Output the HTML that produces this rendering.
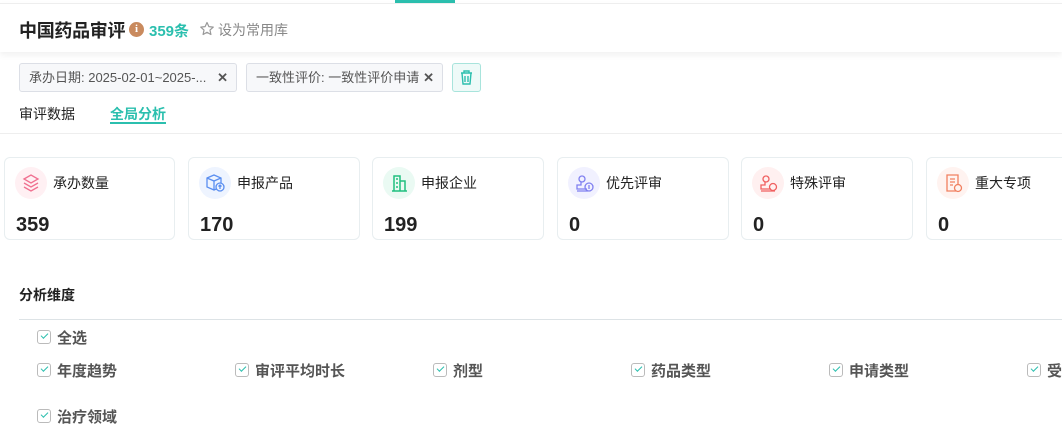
<!DOCTYPE html>
<html><head><meta charset="utf-8"><style>
*{margin:0;padding:0;box-sizing:border-box}
body{width:1062px;height:439px;overflow:hidden;background:#fff;font-family:"Liberation Sans","Noto Sans CJK SC",sans-serif;position:relative;color:#222}
.abs{position:absolute}
.hdr{left:0;top:3px;width:1062px;height:49px;background:#fff;box-shadow:0 3px 6px rgba(0,0,0,0.06);border-top:1px solid #eee}
.tag{top:63px;height:29px;border:1px solid #dcdfe6;border-radius:3px;background:#f7f8fa;font-size:13px;color:#555;line-height:27px;padding-left:9px}
.tag b{position:absolute;right:8px;top:0;font-weight:bold;color:#555;font-size:13px}
.card{top:157px;width:172px;height:83px;border:1px solid #e8eef0;border-radius:6px;background:#fff}
.ic{position:absolute;left:10px;top:9px;width:32px;height:32px;border-radius:50%}
.card .l{position:absolute;left:48px;top:15px;font-size:14px;color:#222}
.card .n{position:absolute;left:11px;top:56px;font-size:20px;font-weight:bold;color:#222}
.cb{font-size:15px;color:#555;font-weight:bold}
.cb i{position:absolute;left:0;top:2px;width:14px;height:14px;border:1px solid #bbb;border-radius:3px}
.cb i:after{content:"";position:absolute;left:3px;top:2px;width:6px;height:3px;border-left:1.5px solid #2bbfae;border-bottom:1.5px solid #2bbfae;transform:rotate(-45deg)}
.cb span{position:absolute;left:20px;top:-1px;white-space:nowrap}
</style></head><body>
<div class="abs" style="left:395px;top:0;width:60px;height:3px;background:#2bbfae"></div>
<div class="abs hdr"></div>
<div class="abs" style="left:19px;top:17px;font-size:18px;font-weight:bold;color:#222;letter-spacing:-0.3px">中国药品审评</div>
<div class="abs" style="left:129px;top:22px;width:15px;height:15px;border-radius:50%;background:#c98a5e;color:#fff;font-size:11px;font-weight:bold;text-align:center;line-height:15px;font-family:'Liberation Serif',serif">i</div>
<div class="abs" style="left:149px;top:20px;font-size:15px;font-weight:bold;color:#2bbfae">359条</div>
<svg class="abs" style="left:199px;top:21px" width="16" height="16" viewBox="0 0 16 16"><path d="M8 1.5l1.9 4.1 4.4.5-3.3 3 .9 4.4L8 11.3l-3.9 2.2.9-4.4-3.3-3 4.4-.5z" fill="none" stroke="#999" stroke-width="1.2" stroke-linejoin="round"/></svg>
<div class="abs" style="left:218px;top:20px;font-size:14px;color:#888">设为常用库</div>
<div class="abs tag" style="left:19px;width:218px">承办日期: 2025-02-01~2025-...<b>✕</b></div>
<div class="abs tag" style="left:246px;width:197px">一致性评价: 一致性评价申请<b>✕</b></div>
<div class="abs" style="left:452px;top:63px;width:29px;height:29px;border:1px solid #a8e4dc;background:#eefaf8;border-radius:3px">
<svg width="27" height="27" viewBox="0 0 27 27"><g fill="none" stroke="#2bbfae" stroke-width="1.4"><path d="M8 9h11M11 9V7h5v2M9 9l1 11h7l1-11M12 12v6M15 12v6"/></g></svg></div>
<div class="abs" style="left:19px;top:104px;font-size:14px;color:#222">审评数据</div>
<div class="abs" style="left:110px;top:104px;font-size:14px;font-weight:bold;color:#2bbfae">全局分析</div>
<div class="abs" style="left:110px;top:122px;width:56px;height:2px;background:#2bbfae"></div>
<div class="abs" style="left:0;top:133px;width:1062px;height:1px;background:#eee"></div>

<div class="abs card" style="left:4px;width:171px"><div class="ic" style="background:#fff0f3"><svg width="32" height="32"><g fill="none" stroke="#f07090" stroke-width="1.3"><path d="M9 12l7-4 7 4-7 4z"/><path d="M9 16l7 4 7-4M9 20l7 4 7-4"/></g></svg></div><div class="l">承办数量</div><div class="n">359</div></div>
<div class="abs card" style="left:188px"><div class="ic" style="background:#eef4ff"><svg width="32" height="32"><g fill="none" stroke="#5b8ff0" stroke-width="1.3"><path d="M8 11l7-3 7 3v9l-7 3-7-3z"/><path d="M8 11l7 3 7-3M15 14v9"/><circle cx="21" cy="20" r="4" fill="#eef4ff"/><path d="M21 22v-4M19.5 19.5l1.5-1.5 1.5 1.5"/></g></svg></div><div class="l">申报产品</div><div class="n">170</div></div>
<div class="abs card" style="left:372px"><div class="ic" style="background:#eafaf3"><svg width="32" height="32"><g fill="none" stroke="#20c080" stroke-width="1.5"><path d="M9 24h15M11 24V9h6v15M17 14h5v10M13 12h2M13 16h2M13 20h2"/></g></svg></div><div class="l">申报企业</div><div class="n">199</div></div>
<div class="abs card" style="left:557px"><div class="ic" style="background:#f1f1ff"><svg width="32" height="32"><g fill="none" stroke="#8080f0" stroke-width="1.3"><circle cx="14" cy="12" r="3"/><path d="M13 15v3h-4v4h10M9 24h11"/><circle cx="21" cy="20" r="4"/><path d="M21 18v4"/></g></svg></div><div class="l">优先评审</div><div class="n">0</div></div>
<div class="abs card" style="left:741px"><div class="ic" style="background:#fff0f0"><svg width="32" height="32"><g fill="none" stroke="#f06060" stroke-width="1.3"><circle cx="14" cy="12" r="3"/><path d="M13 15v3h-4v4h10M9 24h14"/><circle cx="21" cy="20" r="3.5"/></g></svg></div><div class="l">特殊评审</div><div class="n">0</div></div>
<div class="abs card" style="left:926px"><div class="ic" style="background:#fff3f0"><svg width="32" height="32"><g fill="none" stroke="#f08060" stroke-width="1.3"><path d="M19 24H10V8h11v9M13 12h5M13 15h5M13 18h3"/><circle cx="21" cy="21" r="3.5"/></g></svg></div><div class="l">重大专项</div><div class="n">0</div></div>

<div class="abs" style="left:19px;top:285px;font-size:14px;font-weight:bold;color:#222">分析维度</div>
<div class="abs" style="left:19px;top:319px;width:1043px;height:1px;background:#dde3e6"></div>
<div class="abs cb" style="left:37px;top:328px"><i></i><span>全选</span></div>
<div class="abs cb" style="left:37px;top:361px"><i></i><span>年度趋势</span></div>
<div class="abs cb" style="left:235px;top:361px"><i></i><span>审评平均时长</span></div>
<div class="abs cb" style="left:433px;top:361px"><i></i><span>剂型</span></div>
<div class="abs cb" style="left:631px;top:361px"><i></i><span>药品类型</span></div>
<div class="abs cb" style="left:829px;top:361px"><i></i><span>申请类型</span></div>
<div class="abs cb" style="left:1027px;top:361px"><i></i><span>受理</span></div>
<div class="abs cb" style="left:37px;top:407px"><i></i><span>治疗领域</span></div>
</body></html>
